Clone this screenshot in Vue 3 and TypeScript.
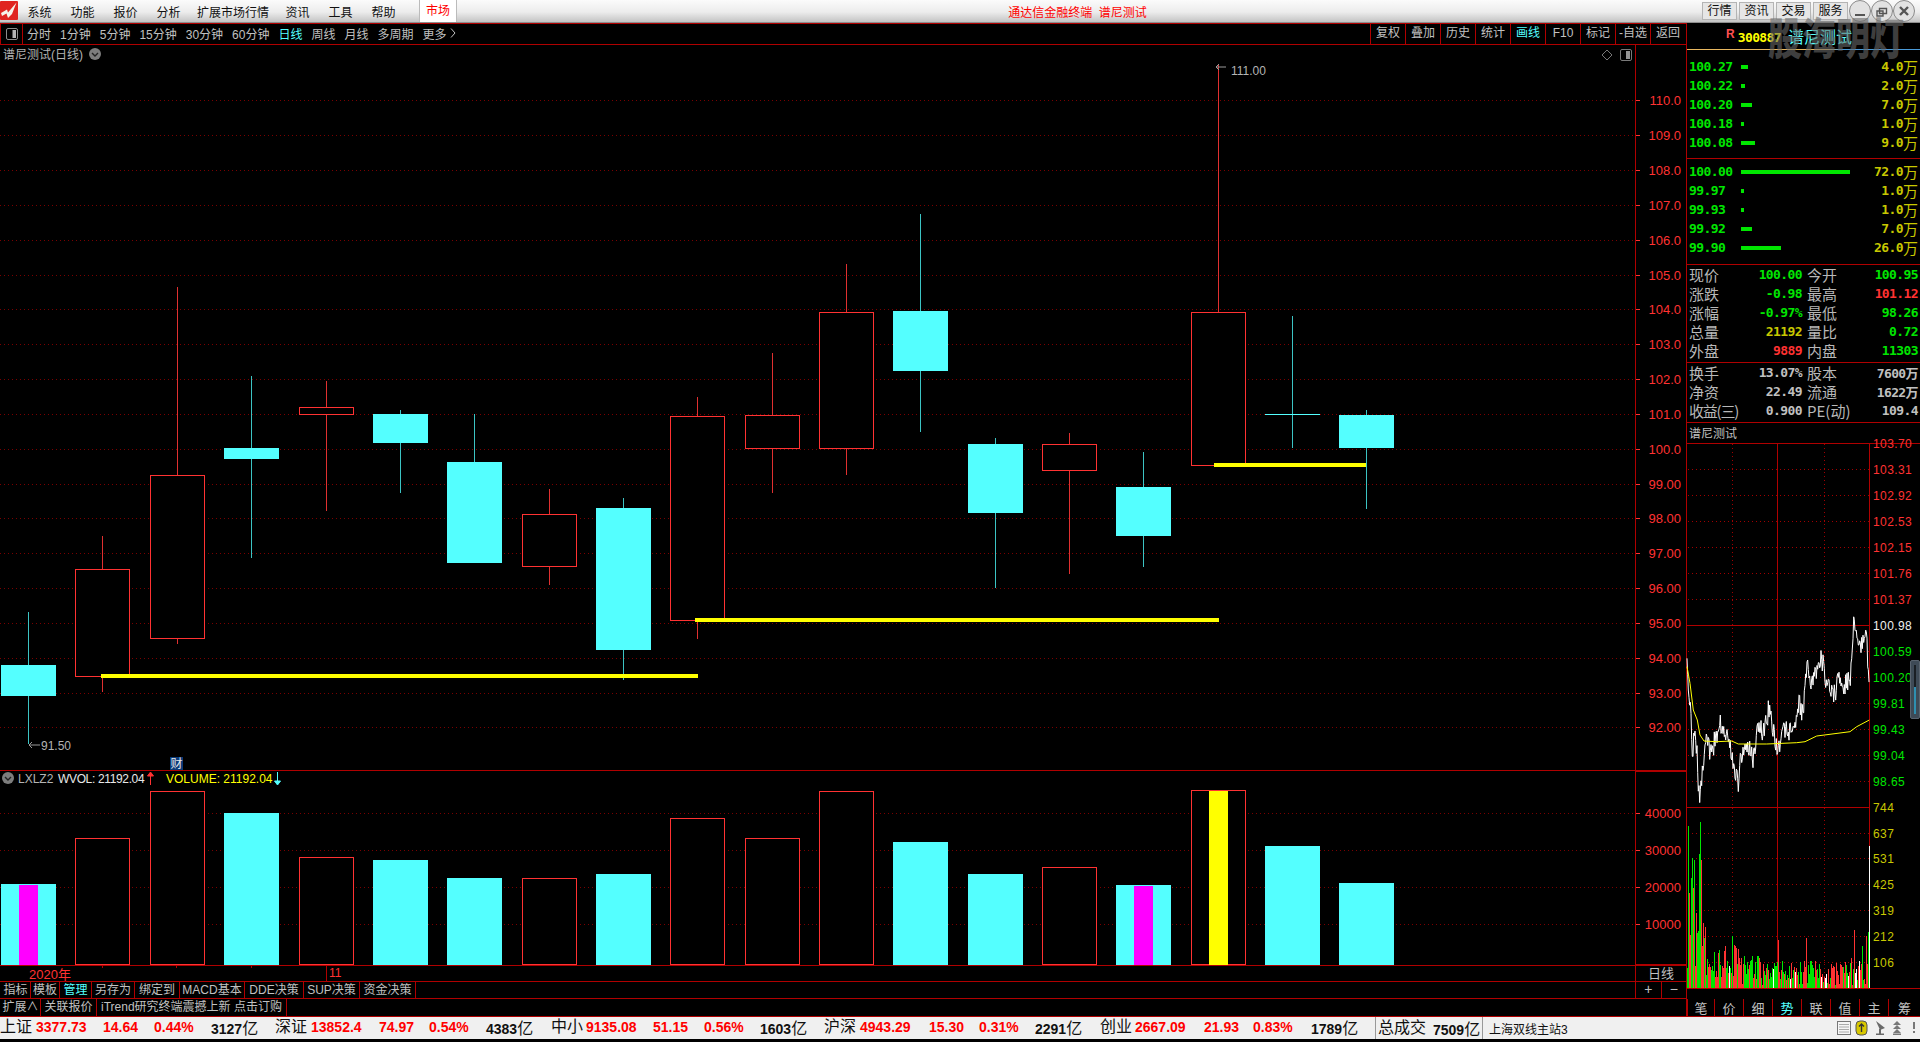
<script setup lang="ts">
const S = 1920 / 1568
const cx = (i: number) => 28.1 + 74.35 * i
const bodyW = 54

type C = { x: number; top: number; bt: number; bb: number; bot: number; up: boolean; vol: number; mark: string }
const raw: [number, number, number, number, boolean, number, string][] = [
  [500, 543, 568, 608, false, 722, '#ff00ff'],
  [438, 465, 552, 565, true, 684, ''],
  [234, 388, 521, 526, true, 646, ''],
  [307, 366, 375, 456, false, 664, ''],
  [311, 332, 338, 417, true, 700, ''],
  [335, 338, 362, 403, false, 702, ''],
  [338, 377, 460, 460, false, 717, ''],
  [399, 420, 462, 478, true, 717, ''],
  [407, 415, 531, 555, false, 714, ''],
  [324, 340, 506, 522, true, 668, ''],
  [288, 339, 366, 403, true, 684, ''],
  [216, 255, 366, 388, true, 646, ''],
  [175, 254, 303, 353, false, 688, ''],
  [358, 363, 419, 480, false, 714, ''],
  [354, 363, 384, 469, true, 708, ''],
  [369, 398, 438, 463, false, 723, '#ff00ff'],
  [53, 255, 380, 380, true, 645, '#ffff00'],
  [258, 338, 338.6, 366, false, 691, ''],
  [335, 339, 366, 416, false, 721, '']
]
const candles: C[] = raw.map((r, i) => ({
  x: Math.round(cx(i)),
  top: Math.round(r[0] * S),
  bt: Math.round(r[1] * S),
  bb: Math.round(r[2] * S),
  bot: Math.round(r[3] * S),
  up: r[4],
  vol: Math.round(r[5] * S),
  mark: r[6]
}))
const volBase = 964

const priceY = (p: number) => Math.round(100.4 + (110 - p) * 34.83) + 0.5
const priceTicks = Array.from({ length: 19 }, (_, i) => {
  const p = 92 + i
  return { y: priceY(p), label: p >= 100 ? p.toFixed(1) : p.toFixed(2) }
})
const volTicks = [
  { y: 813.5, label: '40000' },
  { y: 850.5, label: '30000' },
  { y: 887.5, label: '20000' },
  { y: 924.5, label: '10000' }
]
const levels = [
  { x1: 101, x2: 698, y: 674 },
  { x1: 695, x2: 1219, y: 618 },
  { x1: 1214, x2: 1366, y: 463 }
]

const menus = ['系统', '功能', '报价', '分析', '扩展市场行情', '资讯', '工具', '帮助']
const sideBtns = ['行情', '资讯', '交易', '服务']
const periods = ['分时', '1分钟', '5分钟', '15分钟', '30分钟', '60分钟', '日线', '周线', '月线', '多周期']
const tools = ['复权', '叠加', '历史', '统计', '画线', 'F10', '标记', '-自选', '返回']

const asks = [
  { p: '100.27', w: 7, v: '4.0' },
  { p: '100.22', w: 4, v: '2.0' },
  { p: '100.20', w: 11, v: '7.0' },
  { p: '100.18', w: 3, v: '1.0' },
  { p: '100.08', w: 14, v: '9.0' }
]
const bids = [
  { p: '100.00', w: 109, v: '72.0' },
  { p: '99.97', w: 3, v: '1.0' },
  { p: '99.93', w: 3, v: '1.0' },
  { p: '99.92', w: 11, v: '7.0' },
  { p: '99.90', w: 40, v: '26.0' }
]
const stats1 = [
  ['现价', '100.00', 'g', '今开', '100.95', 'g'],
  ['涨跌', '-0.98', 'g', '最高', '101.12', 'r'],
  ['涨幅', '-0.97%', 'g', '最低', '98.26', 'g'],
  ['总量', '21192', 'y', '量比', '0.72', 'g'],
  ['外盘', '9889', 'r', '内盘', '11303', 'g']
]
const stats2 = [
  ['换手', '13.07%', 'w', '股本', '7600万', 'w'],
  ['净资', '22.49', 'w', '流通', '1622万', 'w'],
  ['收益(三)', '0.900', 'w', 'PE(动)', '109.4', 'w']
]

const tabs1 = [
  { t: '指标', w: 30 }, { t: '模板', w: 29 }, { t: '管理', w: 32, on: true }, { t: '另存为', w: 43 },
  { t: '绑定到', w: 45 }, { t: 'MACD基本', w: 65 }, { t: 'DDE决策', w: 59 }, { t: 'SUP决策', w: 56 }, { t: '资金决策', w: 56 }
]
const tabs2 = [
  { t: '扩展∧', w: 40 }, { t: '关联报价', w: 56 }, { t: 'iTrend研究终端震撼上新 点击订购', w: 190 }
]
const sideTabs = [
  { t: '笔', w: 27 }, { t: '价', w: 29 }, { t: '细', w: 29 }, { t: '势', w: 29, on: true },
  { t: '联', w: 29 }, { t: '值', w: 29 }, { t: '主', w: 29 }, { t: '筹', w: 32 }
]

type Seg = { t: string; w: number; k: string; u?: string }
const seg: Seg[] = [
  { t: '上证', w: 36, k: 'lab' }, { t: '3377.73', w: 67, k: 'num' }, { t: '14.64', w: 51, k: 'num' }, { t: '0.44%', w: 57, k: 'num' }, { t: '3127', w: 64, k: 'vol', u: '亿' },
  { t: '深证', w: 36, k: 'lab' }, { t: '13852.4', w: 68, k: 'num' }, { t: '74.97', w: 50, k: 'num' }, { t: '0.54%', w: 57, k: 'num' }, { t: '4383', w: 65, k: 'vol', u: '亿' },
  { t: '中小', w: 35, k: 'lab' }, { t: '9135.08', w: 67, k: 'num' }, { t: '51.15', w: 51, k: 'num' }, { t: '0.56%', w: 56, k: 'num' }, { t: '1603', w: 64, k: 'vol', u: '亿' },
  { t: '沪深', w: 36, k: 'lab' }, { t: '4943.29', w: 69, k: 'num' }, { t: '15.30', w: 50, k: 'num' }, { t: '0.31%', w: 56, k: 'num' }, { t: '2291', w: 65, k: 'vol', u: '亿' },
  { t: '创业', w: 35, k: 'lab' }, { t: '2667.09', w: 69, k: 'num' }, { t: '21.93', w: 49, k: 'num' }, { t: '0.83%', w: 58, k: 'num' }, { t: '1789', w: 64, k: 'vol', u: '亿' }
]

// deterministic noise
let seed = 12345
const rnd = () => {
  seed = (seed * 1664525 + 1013904223) % 4294967296
  return seed / 4294967296
}
const toX = (px: number) => 1640 + px / 3
const toY = (py: number) => 440 + py / 3
const pKeys: [number, number][] = [
  [141, 655], [145, 750], [152, 830], [157, 940], [165, 870], [172, 960], [178, 1086], [190, 950], [200, 890],
  [212, 950], [225, 900], [240, 845], [255, 880], [270, 900], [278, 970], [295, 1030], [300, 960], [318, 900],
  [340, 960], [355, 850], [368, 880], [385, 815], [400, 860], [412, 935], [430, 855], [445, 880], [470, 850],
  [478, 790], [490, 830], [500, 680], [515, 740], [545, 650], [560, 730], [585, 760], [595, 700], [615, 740],
  [632, 710], [640, 550], [660, 620], [680, 595], [688, 745]
]
const interp = (keys: [number, number][], px: number) => {
  for (let i = 1; i < keys.length; i++) {
    if (px <= keys[i][0]) {
      const [a, b] = keys[i - 1]
      const [c, d] = keys[i]
      return b + ((d - b) * (px - a)) / (c - a || 1)
    }
  }
  return keys[keys.length - 1][1]
}
const pricePts: string[] = []
for (let px = 141; px <= 688; px += 2) {
  const n = px > 150 && px < 684 ? (rnd() - 0.5) * 66 : 0
  pricePts.push(`${toX(px).toFixed(1)},${toY(interp(pKeys, px) + n).toFixed(1)}`)
}
const priceLine = pricePts.join(' ')
const avgKeys: [number, number][] = [
  [141, 680], [150, 730], [160, 810], [172, 840], [180, 885], [192, 903], [230, 905], [275, 903], [295, 912], [380, 912],
  [470, 908], [495, 905], [530, 888], [630, 875], [650, 860], [688, 840]
]
const avgLine = avgKeys.map(([a, b]) => `${toX(a).toFixed(1)},${toY(b).toFixed(1)}`).join(' ')

const spikes: Record<number, [number, string]> = {
  1688: [162, '#00e600'], 1689: [95, '#ff3232'], 1691: [110, '#00e600'], 1692: [130, '#00e600'], 1693: [100, '#ff3232'],
  1694: [128, '#00e600'], 1696: [75, '#ff3232'], 1697: [55, '#00e600'], 1699: [134, '#00e600'], 1700: [166, '#00e600'],
  1701: [128, '#ff3232'], 1702: [42, '#ff3232'], 1703: [65, '#ff3232'], 1704: [50, '#00e600'], 1732: [52, '#00e600'],
  1778: [48, '#ff3232'], 1806: [50, '#ff3232'], 1854: [58, '#ff3232'], 1851: [30, '#ff3232'], 1862: [42, '#00e600'], 1866: [52, '#ff3232'], 1868: [56, '#00e600']
}
const miniBars: { x: number; h: number; c: string }[] = []
for (let x = 1687; x < 1869; x++) {
  const sp = spikes[x]
  if (sp) {
    miniBars.push({ x, h: sp[0], c: sp[1] })
    continue
  }
  const env = x < 1710 ? 62 : x < 1745 ? 42 : x < 1760 ? 30 : 24
  const r = rnd()
  const c = r < 0.45 ? '#00e600' : r < 0.92 ? '#ff3232' : '#ffffff'
  miniBars.push({ x, h: Math.round(3 + env * rnd()), c })
}

const miniRows = [469, 495, 521, 547, 573, 599, 651, 677, 703, 729, 755, 781, 833, 858, 884, 910, 936, 962]
const miniLabels = [
  { y: 443, t: '103.70', c: 'r' }, { y: 469, t: '103.31', c: 'r' }, { y: 495, t: '102.92', c: 'r' }, { y: 521, t: '102.53', c: 'r' },
  { y: 547, t: '102.15', c: 'r' }, { y: 573, t: '101.76', c: 'r' }, { y: 599, t: '101.37', c: 'r' }, { y: 625, t: '100.98', c: 'w' },
  { y: 651, t: '100.59', c: 'g' }, { y: 677, t: '100.20', c: 'g' }, { y: 703, t: '99.81', c: 'g' }, { y: 729, t: '99.43', c: 'g' },
  { y: 755, t: '99.04', c: 'g' }, { y: 781, t: '98.65', c: 'g' }, { y: 807, t: '744', c: 'y' }, { y: 833, t: '637', c: 'y' },
  { y: 858, t: '531', c: 'y' }, { y: 884, t: '425', c: 'y' }, { y: 910, t: '319', c: 'y' }, { y: 936, t: '212', c: 'y' }, { y: 962, t: '106', c: 'y' }
]
</script>

<template>
  <div class="app">
    <header class="titlebar">
      <svg class="logo" width="18" height="19" viewBox="0 0 18 19">
        <rect width="18" height="19" rx="1" fill="#e02420" />
        <path d="M1 12 L7 8.5 L8 11.5 L16.5 1.5 L12 13 L8 17 L6.5 12.5 L2 15 Z" fill="#f6f2ea" />
      </svg>
      <nav class="menus">
        <span v-for="m in menus" :key="m" class="menu" :class="{ wide: m.length > 2 }">{{ m }}</span>
      </nav>
      <span class="market">市场</span>
      <span class="apptitle">通达信金融终端&nbsp;&nbsp;谱尼测试</span>
      <div class="sidebtns">
        <span v-for="b in sideBtns" :key="b" class="sidebtn">{{ b }}</span>
      </div>
      <svg class="winbtns" width="66" height="22" viewBox="0 0 66 22">
        <g fill="#e2e2e2" stroke="#8a8a8a">
          <circle cx="11" cy="11" r="10.5" />
          <circle cx="33" cy="11" r="10.5" />
          <circle cx="55" cy="11" r="10.5" />
        </g>
        <rect x="6" y="14" width="10" height="2" fill="#555" />
        <path d="M30.5 8.5h7v5h-7zM28 11h6v5h-6z" fill="none" stroke="#555" stroke-width="1.4" />
        <path d="M51 7l8 8M59 7l-8 8" stroke="#555" stroke-width="2.4" />
      </svg>
    </header>

    <div class="work">
      <section class="leftcol">
        <div class="toolbar">
          <span class="boxcell">
            <svg width="12" height="12" viewBox="0 0 12 12">
              <rect x=".5" y=".5" width="11" height="11" rx="1.5" fill="none" stroke="#8c8c8c" />
              <rect x="6.5" y="2" width="3.5" height="8" fill="#b4b4b4" />
            </svg>
          </span>
          <div class="periods">
            <span v-for="p in periods" :key="p" :class="{ cyan: p === '日线' }">{{ p }}</span>
            <span class="more">更多
              <svg width="6" height="10" viewBox="0 0 6 10"><path d="M1 .5l4 4.5-4 4.5" fill="none" stroke="#c0c0c0" /></svg>
            </span>
          </div>
          <div class="tools">
            <span v-for="t in tools" :key="t" class="tool" :class="{ cyan: t === '画线' }">{{ t }}</span>
          </div>
        </div>

        <svg class="chart" width="1687" height="921" viewBox="0 45 1687 921">
          <!-- grid -->
          <g stroke="#7a0000" stroke-dasharray="1 3" shape-rendering="crispEdges">
            <line v-for="t in priceTicks" :key="t.y" x1="0" x2="1636" :y1="t.y" :y2="t.y" />
            <line v-for="t in volTicks" :key="t.y" x1="0" x2="1636" :y1="t.y" :y2="t.y" />
          </g>
          <!-- frame -->
          <g stroke="#b00000" shape-rendering="crispEdges">
            <line x1="1635.5" x2="1635.5" y1="45" y2="966" />
            <line x1="1686.5" x2="1686.5" y1="45" y2="966" />
            <line x1="0" x2="1636" y1="770.5" y2="770.5" />
            <line x1="1636" x2="1686" y1="771" y2="771" stroke-width="2" />
            <line x1="0" x2="1636" y1="965.5" y2="965.5" />
            <line x1="1636" x2="1686" y1="965" y2="965" stroke-width="2" />
          </g>
          <g stroke="#ff3232" shape-rendering="crispEdges">
            <line v-for="t in priceTicks" :key="t.y" x1="1636" x2="1640" :y1="t.y" :y2="t.y" />
            <line v-for="t in volTicks" :key="t.y" x1="1636" x2="1640" :y1="t.y" :y2="t.y" />
          </g>
          <g class="axis">
            <text v-for="t in priceTicks" :key="t.y" x="1681" :y="t.y + 4" text-anchor="end">{{ t.label }}</text>
            <text v-for="t in volTicks" :key="t.y" x="1681" :y="t.y + 4" text-anchor="end">{{ t.label }}</text>
          </g>

          <!-- candles -->
          <g shape-rendering="crispEdges">
            <g v-for="(c, i) in candles" :key="i">
              <line :x1="c.x + 0.5" :x2="c.x + 0.5" :y1="c.top" :y2="c.bot" :stroke="c.up ? '#e03030' : '#3cc4c4'" />
              <rect v-if="c.up" :x="c.x - bodyW / 2 + 0.5" :y="c.bt + 0.5" :width="bodyW" :height="c.bb - c.bt" fill="#000" stroke="#ff3232" />
              <rect v-else :x="c.x - bodyW / 2" :y="c.bt" :width="bodyW + 1" :height="Math.max(c.bb - c.bt, 1)" fill="#54ffff" />
              <rect v-if="c.up" :x="c.x - bodyW / 2 + 0.5" :y="c.vol + 0.5" :width="bodyW" :height="volBase - c.vol" fill="#000" stroke="#ff3232" />
              <rect v-else :x="c.x - bodyW / 2" :y="c.vol" :width="bodyW + 1" :height="volBase - c.vol + 1" fill="#54ffff" />
              <rect v-if="c.mark" :x="c.x - 9" :y="c.vol + 1" width="19" :height="volBase - c.vol" :fill="c.mark" />
            </g>
            <rect v-for="l in levels" :key="l.x1" :x="l.x1" :y="l.y" :width="l.x2 - l.x1" height="4" fill="#ffff00" />
          </g>

          <!-- annotations -->
          <text class="lab" x="3" y="59">谱尼测试(日线)</text>
          <g>
            <circle cx="95" cy="54" r="6" fill="#7d7d7d" />
            <path d="M92 53l3 3 3-3" fill="none" stroke="#222" stroke-width="1.4" />
          </g>
          <path d="M1607 50l5 5-5 5-5-5z" fill="none" stroke="#777" />
          <g>
            <rect x="1620.5" y="49.5" width="11" height="11" rx="1.5" fill="none" stroke="#7a7a7a" />
            <rect x="1626" y="51" width="4" height="8" fill="#949494" />
          </g>

          <path d="M1219 70l-3-3 3-3M1216 67h10" fill="none" stroke="#9a9a9a" />
          <text class="lab" x="1231" y="75">111.00</text>
          <path d="M32 742l-3 3 3 3M29 745h11" fill="none" stroke="#9a9a9a" />
          <text class="lab" x="41" y="750">91.50</text>

          <rect x="170" y="757" width="13" height="13" fill="#0a3a78" />
          <text class="lab white" x="170.5" y="768">财</text>

          <g>
            <circle cx="8" cy="778" r="6" fill="#7d7d7d" />
            <path d="M5 777l3 3 3-3" fill="none" stroke="#222" stroke-width="1.4" />
          </g>
          <text class="lab" x="18" y="783">LXLZ2</text>
          <text class="lab white tight" x="58" y="783">WVOL: 21192.04</text>
          <path d="M150.5 785v-12M147.5 776l3-4 3 4z" stroke="#ff3232" fill="#ff3232" />
          <text class="lab yellow" x="166" y="783">VOLUME: 21192.04</text>
          <path d="M277.5 772v11M274.5 781l3 4 3-4z" stroke="#54ffff" fill="#54ffff" />
        </svg>

        <div class="daterow">
          <div class="dates">
            <span class="tick t1"></span><span class="tick t2"></span><span class="tick t3"></span>
            <span class="dtxt d1">2020年</span>
            <span class="dtxt d2">11</span>
          </div>
          <span class="axiscell">日线</span>
        </div>
        <div class="tabrow">
          <div class="tabs">
            <span v-for="t in tabs1" :key="t.t" class="tab" :class="{ cyan: t.on }" :style="{ width: t.w + 'px' }">{{ t.t }}</span>
          </div>
          <div class="zoomcell"><span>+</span><span>−</span></div>
        </div>
        <div class="tabrow last">
          <div class="tabs">
            <span v-for="t in tabs2" :key="t.t" class="tab" :style="{ width: t.w + 'px' }">{{ t.t }}</span>
          </div>
        </div>
      </section>

      <aside class="rightcol">
        <div class="head">
          <span class="rmark">R</span>
          <span class="code">300887</span>
          <span class="sname">谱尼测试</span>
        </div>
        <div class="book first">
          <div v-for="a in asks" :key="a.p" class="brow">
            <span class="bprice">{{ a.p }}</span>
            <i class="bbar" :style="{ width: a.w + 'px' }"></i>
            <span class="bvol">{{ a.v }}<em>万</em></span>
          </div>
        </div>
        <div class="book second">
          <div v-for="a in bids" :key="a.p" class="brow">
            <span class="bprice">{{ a.p }}</span>
            <i class="bbar" :style="{ width: a.w + 'px' }"></i>
            <span class="bvol">{{ a.v }}<em>万</em></span>
          </div>
        </div>
        <div class="stats s1">
          <div v-for="s in stats1" :key="s[0]" class="srow">
            <span class="sl">{{ s[0] }}</span><span class="sv" :class="s[2]">{{ s[1] }}</span>
            <span class="sl">{{ s[3] }}</span><span class="sv" :class="s[5]">{{ s[4] }}</span>
          </div>
        </div>
        <div class="stats s2">
          <div v-for="s in stats2" :key="s[0]" class="srow">
            <span class="sl" :class="{ narrow: s[0].length > 2 }">{{ s[0] }}</span><span class="sv" :class="s[2]">{{ s[1] }}</span>
            <span class="sl">{{ s[3] }}</span><span class="sv" :class="s[5]">{{ s[4] }}</span>
          </div>
        </div>
        <div class="mininame">谱尼测试</div>
        <svg class="mini" width="233" height="555" viewBox="1687 444 233 555">
          <g stroke="#a00000" stroke-dasharray="1 3" shape-rendering="crispEdges">
            <line v-for="y in miniRows" :key="y" x1="1688" x2="1869" :y1="y + 0.5" :y2="y + 0.5" />
            <line x1="1732.5" x2="1732.5" y1="444" y2="988" />
            <line x1="1824.5" x2="1824.5" y1="444" y2="988" />
          </g>
          <g stroke="#b00000" shape-rendering="crispEdges">
            <line x1="1777.5" x2="1777.5" y1="444" y2="988" />
            <line x1="1869.5" x2="1869.5" y1="444" y2="846" />
            <line x1="1687" x2="1869" y1="625.5" y2="625.5" />
            <line x1="1687" x2="1869" y1="807.5" y2="807.5" />
            <line x1="1687" x2="1920" y1="988.5" y2="988.5" />
          </g>
          <line x1="1869.5" x2="1869.5" y1="846" y2="988" stroke="#fff" shape-rendering="crispEdges" />
          <g shape-rendering="crispEdges">
            <rect v-for="b in miniBars" :key="b.x" :x="b.x" :y="988 - b.h" width="1" :height="b.h" :fill="b.c" />
          </g>
          <polyline :points="priceLine" fill="none" stroke="#fff" stroke-width="1" />
          <polyline :points="avgLine" fill="none" stroke="#ffff00" stroke-width="1" />
          <g class="minilabels">
            <text v-for="l in miniLabels" :key="l.y" :class="l.c" x="1873" :y="l.y + 5">{{ l.t }}</text>
          </g>
        </svg>
        <div class="sidetabs">
          <span v-for="t in sideTabs" :key="t.t" class="sidetab" :class="{ cyan: t.on }" :style="{ width: t.w + 'px' }">{{ t.t }}</span>
        </div>
      </aside>
    </div>

    <footer class="status">
      <div class="segs">
        <span v-for="(s, i) in seg" :key="i" class="seg" :class="s.k" :style="{ width: s.w + 'px' }">{{ s.t }}<em v-if="s.u">{{ s.u }}</em></span>
      </div>
      <div class="total"><span class="lab2">总成交</span><span class="seg vol">7509<em>亿</em></span></div>
      <div class="server">上海双线主站3</div>
      <svg class="trayicons" width="84" height="20" viewBox="0 0 84 20">
        <rect x="1.5" y="3.5" width="13" height="13" fill="#f5f5f5" stroke="#777" />
        <path d="M3 6.5h10M3 9h10M3 11.5h10M3 14h10" stroke="#aaa" />
        <rect x="20" y="3" width="11" height="14" rx="4" fill="#d8c800" stroke="#555" />
        <path d="M25.5 6v8M23 8.5l2.5-2.5 2.5 2.5" fill="none" stroke="#333" stroke-width="1.4" />
        <path d="M40 3l9 7-5 2z" fill="#6a6a6a" />
        <rect x="43" y="11" width="2" height="5" fill="#6a6a6a" />
        <rect x="40" y="15.5" width="8" height="1.5" fill="#6a6a6a" />
        <path d="M61 3l4 4h-8zM61 7l4 4h-8zM61 11l4 4h-8z" fill="#777" />
        <rect x="57" y="15.5" width="8" height="1.5" fill="#777" />
        <rect x="77" y="4" width="2" height="7" fill="#777" />
        <rect x="77" y="13" width="2" height="2" fill="#777" />
      </svg>
    </footer>

    <div class="watermark">股海明灯</div>
    <div class="handle"><i></i></div>
  </div>
</template>

<style scoped>
.app {
  position: relative;
  width: 1920px;
  height: 1042px;
  overflow: hidden;
  background: #000;
  display: flex;
  flex-direction: column;
  font-family: "Liberation Sans", "Noto Sans CJK SC", sans-serif;
  font-size: 12px;
  color: #c0c0c0;
}
.titlebar {
  height: 23px;
  flex: none;
  display: flex;
  align-items: center;
  background: linear-gradient(#fbfbfb, #ececec 55%, #c4c4c4);
  border-bottom: 1px solid #8e8e8e;
  box-sizing: border-box;
  color: #111;
}
.logo { flex: none; margin-top: -1px; }
.menus { display: flex; margin-left: 0; }
.menu { padding: 0 9.5px; }
.menu.wide { padding: 0 7px; }
.market {
  margin-left: 14px;
  width: 38px;
  height: 22px;
  line-height: 22px;
  text-align: center;
  color: #f00;
  background: #fff;
  border-left: 1px solid #bbb;
  border-right: 1px solid #bbb;
  box-sizing: border-box;
}
.apptitle { margin-left: 551px; color: #f00; white-space: nowrap; }
.sidebtns { margin-left: auto; display: flex; gap: 2px; }
.sidebtn {
  width: 35px;
  height: 18px;
  line-height: 16px;
  text-align: center;
  box-sizing: border-box;
  background: #e6e6e6;
  border: 1px solid #b4b4b4;
}
.winbtns { margin: 0 5px 0 1px; flex: none; }

.work { display: flex; flex: none; height: 994px; }
.leftcol { width: 1687px; flex: none; display: flex; flex-direction: column; }
.toolbar {
  height: 22px;
  flex: none;
  display: flex;
  align-items: center;
  box-sizing: border-box;
  border-top: 1px solid #b00000;
  border-bottom: 1px solid #b00000;
  border-right: 1px solid #b00000;
}
.boxcell {
  width: 23px;
  height: 20px;
  box-sizing: border-box;
  border-right: 1px solid #b00000;
  border-left: 1px solid #b00000;
  display: flex;
  align-items: center;
  justify-content: center;
}
.periods { display: flex; gap: 9px; padding-left: 4px; padding-bottom: 2px; white-space: nowrap; }
.more { display: inline-flex; align-items: center; gap: 3px; }
.tools { margin-left: auto; margin-right: 1px; display: flex; }
.tool {
  width: 35px;
  height: 20px;
  line-height: 18px;
  text-align: center;
  box-sizing: border-box;
  border-left: 1px solid #b00000;
  white-space: nowrap;
}
.cyan { color: #54ffff; }
.chart { display: block; flex: none; }
.chart text { font-size: 12px; }
.axis text { fill: #ff3232; font-size: 13px; }
.lab { fill: #b4b4b4; }
.lab.white { fill: #e8e8e8; }
.lab.yellow { fill: #ffff00; }
.lab.tight { letter-spacing: -.35px; }

.daterow { height: 16px; flex: none; display: flex; border-bottom: 1px solid #b00000; box-sizing: border-box; }
.dates { position: relative; width: 1636px; color: #ff3232; border-right: 1px solid #b00000; box-sizing: border-box; }
.tick { position: absolute; top: 0; width: 1px; height: 2px; background: #b00000; }
.t1 { left: 102px; }
.t2 { left: 176px; }
.t3 { left: 251px; height: 2px; }
.dtxt { position: absolute; top: -2px; font-size: 13px; }
.d1 { left: 29px; }
.d2 { left: 326px; border-left: 1px solid #b00000; padding-left: 2px; top: 0; line-height: 15px; font-size: 12px; }
.axiscell { width: 51px; text-align: center; line-height: 15px; border-right: 1px solid #b00000; box-sizing: border-box; font-size: 13px; }

.tabrow { height: 17px; flex: none; display: flex; border-bottom: 1px solid #b00000; box-sizing: border-box; }
.tabrow.last { height: 18px; border-right: 1px solid #b00000; }
.tabs { display: flex; width: 1636px; flex: none; padding-left: 1px; box-sizing: border-box; border-right: 1px solid #b00000; }
.tabrow.last .tabs { border-right: 0; }
.tab {
  box-sizing: border-box;
  text-align: center;
  line-height: 16px;
  border-right: 1px solid #b00000;
  white-space: nowrap;
  flex: none;
}
.zoomcell { display: flex; width: 51px; box-sizing: border-box; border-right: 1px solid #b00000; color: #c0c0c0; }
.zoomcell span { width: 25px; text-align: center; line-height: 15px; font-size: 14px; }
.zoomcell span:first-child { border-right: 1px solid #b00000; }

.rightcol {
  width: 233px;
  flex: none;
  display: flex;
  flex-direction: column;
  font-family: "DejaVu Sans Mono", "Noto Sans CJK SC", monospace;
}
.head {
  height: 27px;
  flex: none;
  box-sizing: border-box;
  position: relative;
  display: flex;
  align-items: flex-end;
  padding: 0 0 4px 39px;
}
.head::after {
  content: "";
  position: absolute;
  left: 0;
  right: 0;
  bottom: 0;
  height: 1px;
  background: linear-gradient(90deg, #e8b860 0 60%, #4a9ad8 66% 100%);
}
.rmark { color: #ff5050; font: bold 12px "Liberation Sans", sans-serif; margin-right: 3px; position: relative; top: -5px; }
.code { color: #ffff00; font-weight: bold; font-size: 13px; letter-spacing: -.6px; line-height: 17px; }
.sname { color: #54ffff; font-size: 16px; font-family: "Noto Sans CJK SC", sans-serif; margin-left: 7px; line-height: 19px; }

.book { flex: none; box-sizing: border-box; border-bottom: 1px solid #b00000; padding-right: 2px; padding-left: 2px; }
.book.first { height: 109px; padding-top: 7px; }
.book.second { height: 106px; padding-top: 3px; }
.brow { display: flex; align-items: center; height: 19px; }
.bprice { width: 52px; color: #00e600; font-weight: bold; font-size: 13px; letter-spacing: -.6px; }
.bbar { height: 4px; background: #00e600; display: block; }
.bvol { margin-left: auto; color: #c8c800; font-weight: bold; font-size: 13px; letter-spacing: -.6px; white-space: nowrap; display: flex; align-items: center; }
.bvol em, .seg em { font-style: normal; font-weight: normal; font-family: "Noto Sans CJK SC", sans-serif; letter-spacing: 0; }
.bvol em { font-size: 15px; }

.stats { flex: none; box-sizing: border-box; border-bottom: 1px solid #b00000; padding: 0 2px; }
.stats.s1 { height: 98px; }
.stats.s2 { height: 60px; }
.srow { display: grid; grid-template-columns: 50px 63px 48px 68px; column-gap: 0; height: 19px; align-items: center; }
.srow .sl:nth-of-type(3) { padding-left: 5px; }
.sl { font: 15px/19px "Noto Sans CJK SC", sans-serif; color: #b8b8b8; white-space: nowrap; }
.sl.narrow { letter-spacing: -1.2px; }
.sv { text-align: right; font-weight: bold; font-size: 13px; letter-spacing: -.6px; white-space: nowrap; }
.g { color: #00e600; }
.sv.r { color: #ff3232; }
.y { color: #c8c800; }
.w { color: #c0c0c0; }
.mininame {
  height: 21px;
  flex: none;
  box-sizing: border-box;
  border-bottom: 1px solid #b00000;
  padding-left: 2px;
  line-height: 20px;
  font-family: "Noto Sans CJK SC", sans-serif;
  font-size: 12px;
}
.mini { display: block; flex: none; overflow: visible; }
.minilabels text { font: 12px "Liberation Sans", sans-serif; letter-spacing: .4px; }
.minilabels .r { fill: #ff3232; }
.minilabels .w { fill: #f0f0f0; }
.minilabels .g { fill: #00e600; }
.minilabels .y { fill: #c8c800; }
.sidetabs { height: 18px; flex: none; display: flex; box-sizing: border-box; border-bottom: 1px solid #b00000; font-family: "Noto Sans CJK SC", sans-serif; }
.sidetab { box-sizing: border-box; text-align: center; line-height: 17px; font-size: 13px; border-left: 1px solid #b00000; flex: none; }

.status {
  height: 22px;
  flex: none;
  display: flex;
  align-items: center;
  background: #f0f0f0;
  color: #111;
  white-space: nowrap;
}
.segs { display: flex; flex: none; width: 1375px; }
.seg { flex: none; display: block; }
.seg.lab { font-size: 16px; line-height: 22px; }
.seg.num { color: #f00; font-weight: bold; font-size: 14px; line-height: 22px; }
.seg.vol { color: #111; font-weight: bold; font-size: 14px; line-height: 22px; }
.seg em { font-size: 16px; }
.total { width: 108px; height: 22px; flex: none; box-sizing: border-box; border-left: 1px solid #999; border-right: 1px solid #999; display: flex; gap: 7px; padding-left: 2px; }
.lab2 { font-size: 16px; line-height: 22px; }
.server { margin-left: 6px; font-size: 12px; }
.trayicons { margin-left: auto; margin-right: 0; flex: none; }

.watermark {
  position: absolute;
  left: 1768px;
  top: 9px;
  font-size: 34px;
  line-height: 50px;
  font-weight: 900;
  white-space: nowrap;
  color: rgba(105, 105, 105, .6);
  transform: scaleY(1.3);
  transform-origin: 50% 30%;
  font-family: "Noto Sans CJK SC", sans-serif;
  pointer-events: none;
}
.handle {
  position: absolute;
  left: 1910px;
  top: 660px;
  width: 10px;
  height: 59px;
  box-sizing: border-box;
  background: #3e4a56;
  border: 1px solid #59636e;
  border-radius: 2px;
  padding: 4px 3px;
}
.handle i { display: block; height: 100%; background: linear-gradient(#1a1f24 45%, #2f8fb0 45%); }
</style>

<style>
html, body { margin: 0; background: #000; }
</style>
